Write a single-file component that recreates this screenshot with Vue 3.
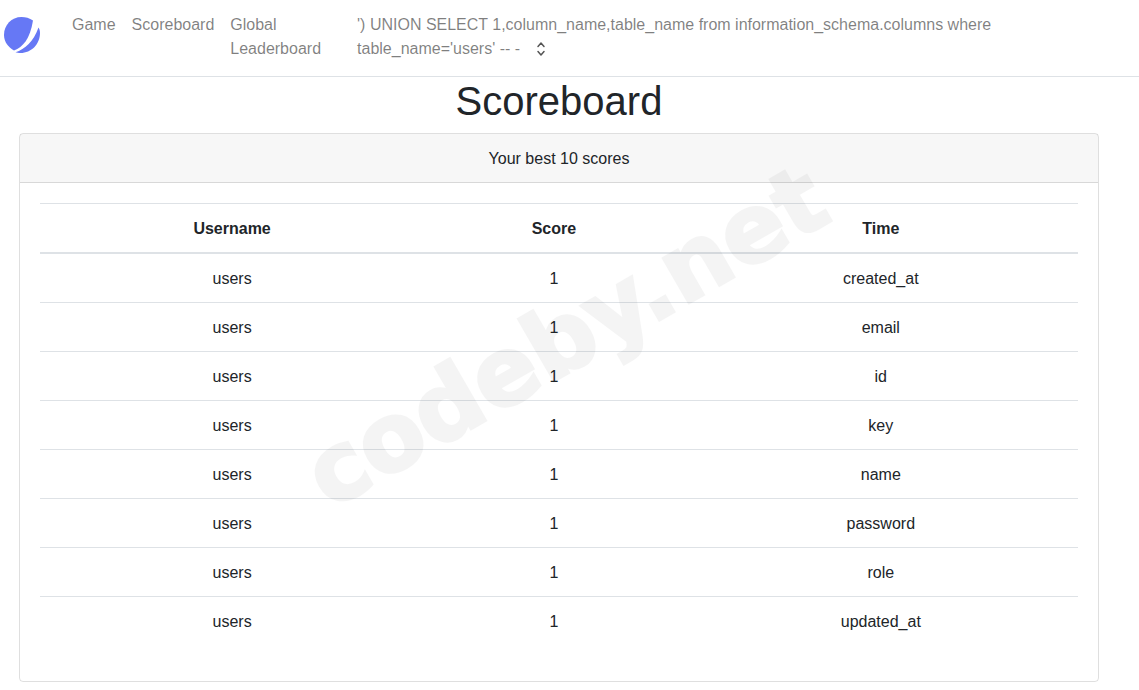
<script setup>
const rows = ['created_at', 'email', 'id', 'key', 'name', 'password', 'role', 'updated_at']
</script>

<template>
  <nav class="navbar">
    <a class="brand" href="#">
      <svg width="40" height="40" viewBox="0 0 40 40">
        <path d="M33 5.500C29.500 3 25.500 2 21.500 2C11.500 2 4 10 4 20C4 27 8.500 32.500 14 35.500C23 32 30 24 33 5.500Z" fill="#6678f5" />
        <path d="M40 18C40 29 31.500 38 20.500 38C18.500 38 17 37.800 15.500 37.300C25 34 33.500 27 38.500 12.500C39.500 14 40 16 40 18Z" fill="#6678f5" />
      </svg>
    </a>
    <ul class="links">
      <li><a href="#">Game</a></li>
      <li><a href="#">Scoreboard</a></li>
      <li><a href="#">Global<br>Leaderboard</a></li>
    </ul>
    <div class="picker">
      ') UNION SELECT 1,column_name,table_name from information_schema.columns where<br>
      table_name='users' -- -
      <svg class="chevrons" width="10" height="16" viewBox="0 0 10 16">
        <path d="M2 5.500L5 2L8 5.500M2 10.500L5 14L8 10.500" fill="none" stroke="#555" stroke-width="1.500" stroke-linecap="round" stroke-linejoin="round" />
      </svg>
    </div>
  </nav>

  <main class="container">
    <h1>Scoreboard</h1>
    <div class="card">
      <div class="card-header">Your best 10 scores</div>
      <div class="card-body">
        <table>
          <thead>
            <tr>
              <th>Username</th>
              <th>Score</th>
              <th>Time</th>
            </tr>
          </thead>
          <tbody>
            <tr v-for="row in rows" :key="row">
              <td>users</td>
              <td>1</td>
              <td>{{ row }}</td>
            </tr>
          </tbody>
        </table>
      </div>
    </div>
  </main>

  <div class="watermark">codeby.net</div>
</template>

<style>
body {
  background: #fff;
}
</style>

<style scoped>
.navbar {
  display: flex;
  align-items: flex-start;
  height: 77px;
  box-sizing: border-box;
  padding: 13px 0 0 0;
  border-bottom: 1px solid #dee2e6;
  font-family: "Liberation Sans", Arial, sans-serif;
  font-size: 16px;
  line-height: 24px;
  color: rgba(0, 0, 0, 0.5);
}

.brand {
  display: block;
  height: 40px;
  margin: 2px 24px 0 0;
}

.links {
  display: flex;
  gap: 16px;
  list-style: none;
  margin: 0;
  padding: 0 0 0 8px;
}

.links a {
  display: block;
  color: rgba(0, 0, 0, 0.5);
  text-decoration: none;
}

.picker {
  margin-left: 36px;
  white-space: nowrap;
}

.chevrons {
  margin-left: 11px;
  vertical-align: -3px;
}

.container {
  padding: 0 40px 0 19px;
  font-family: "Liberation Sans", Arial, sans-serif;
  font-size: 16px;
  line-height: 24px;
  color: #212529;
}

h1 {
  margin: 0 0 8px;
  font-size: 40px;
  font-weight: 500;
  line-height: 48px;
  text-align: center;
}

.card {
  border: 1px solid rgba(0, 0, 0, 0.125);
  border-radius: 4px;
}

.card-header {
  padding: 13px 20px 11px;
  background: rgba(0, 0, 0, 0.03);
  border-bottom: 1px solid rgba(0, 0, 0, 0.125);
  text-align: center;
}

.card-body {
  padding: 20px;
}

table {
  width: 100%;
  margin-bottom: 16px;
  border-collapse: collapse;
  text-align: center;
}

th,
td {
  padding: 13px 12px 11px;
  border-top: 1px solid #dee2e6;
}

th {
  border-bottom: 2px solid #dee2e6;
}

.watermark {
  position: absolute;
  top: 337px;
  left: 566px;
  transform: translate(-50%, -50%) rotate(-30deg);
  font-family: "DejaVu Sans", sans-serif;
  font-size: 94px;
  font-weight: 700;
  line-height: 1;
  white-space: nowrap;
  color: #000;
  -webkit-text-stroke: 3px #000;
  opacity: 0.04;
  pointer-events: none;
}
</style>
